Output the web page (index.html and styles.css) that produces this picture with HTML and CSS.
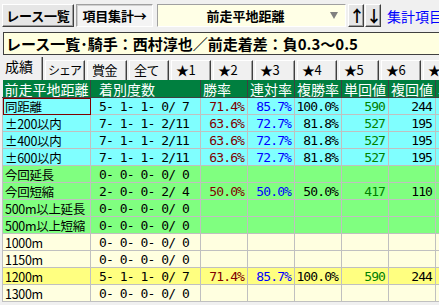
FILE: index.html
```html
<!DOCTYPE html>
<html lang="ja">
<head>
  <meta charset="UTF-8" />
  <title>項目集計</title>
  <link rel="stylesheet" href="styles.css">
</head>
<body>
  <div class="toolbar">
    <button class="btn btn-list">レース一覧</button>
    <button class="btn btn-sum">項目集計→</button>
    <div class="field">
      <span class="field-text">前走平地距離</span>
      <span class="field-arrow"></span>
    </div>
    <button class="btn btn-arrow btn-up">↑</button>
    <button class="btn btn-arrow">↓</button>
    <a class="link" href="#">集計項目&gt;</a>
  </div>

  <div class="caption">レース一覧･騎手：西村淳也／前走着差：負0.3～0.5</div>

  <div class="tabs">
    <div class="tab active">成績</div>
    <div class="tab tight">シェア</div>
    <div class="tab">賞金</div>
    <div class="tab">全て</div>
    <div class="tab">★1</div>
    <div class="tab">★2</div>
    <div class="tab">★3</div>
    <div class="tab">★4</div>
    <div class="tab">★5</div>
    <div class="tab">★6</div>
    <div class="tab">★7</div>
  </div>

  <table class="grid">
    <colgroup>
      <col class="c-name"><col class="c-count">
      <col class="c-num"><col class="c-num"><col class="c-num">
      <col class="c-num"><col class="c-num"><col class="c-num">
    </colgroup>
    <thead>
      <tr>
        <th>前走平地距離</th>
        <th class="h-count">着別度数</th>
        <th>勝率</th>
        <th>連対率</th>
        <th>複勝率</th>
        <th>単回値</th>
        <th>複回値</th>
        <th>単</th>
      </tr>
    </thead>
    <tbody>
      <tr class="cyan">
        <td class="name sel">同距離</td><td class="count">5- 1- 1- 0/ 7</td>
        <td class="win">71.4%</td><td class="ren">85.7%</td><td class="fuku">100.0%</td>
        <td class="tan">590</td><td class="fk">244</td><td></td>
      </tr>
      <tr class="cyan">
        <td class="name">±200以内</td><td class="count">7- 1- 1- 2/11</td>
        <td class="win">63.6%</td><td class="ren">72.7%</td><td class="fuku">81.8%</td>
        <td class="tan">527</td><td class="fk">195</td><td></td>
      </tr>
      <tr class="cyan">
        <td class="name">±400以内</td><td class="count">7- 1- 1- 2/11</td>
        <td class="win">63.6%</td><td class="ren">72.7%</td><td class="fuku">81.8%</td>
        <td class="tan">527</td><td class="fk">195</td><td></td>
      </tr>
      <tr class="cyan">
        <td class="name">±600以内</td><td class="count">7- 1- 1- 2/11</td>
        <td class="win">63.6%</td><td class="ren">72.7%</td><td class="fuku">81.8%</td>
        <td class="tan">527</td><td class="fk">195</td><td></td>
      </tr>
      <tr class="green">
        <td class="name">今回延長</td><td class="count">0- 0- 0- 0/ 0</td>
        <td></td><td></td><td></td><td></td><td></td><td></td>
      </tr>
      <tr class="green">
        <td class="name">今回短縮</td><td class="count">2- 0- 0- 2/ 4</td>
        <td class="win">50.0%</td><td class="ren">50.0%</td><td class="fuku">50.0%</td>
        <td class="tan">417</td><td class="fk">110</td><td></td>
      </tr>
      <tr class="green">
        <td class="name">500m以上延長</td><td class="count">0- 0- 0- 0/ 0</td>
        <td></td><td></td><td></td><td></td><td></td><td></td>
      </tr>
      <tr class="green">
        <td class="name">500m以上短縮</td><td class="count">0- 0- 0- 0/ 0</td>
        <td></td><td></td><td></td><td></td><td></td><td></td>
      </tr>
      <tr class="cream">
        <td class="name">1000m</td><td class="count">0- 0- 0- 0/ 0</td>
        <td></td><td></td><td></td><td></td><td></td><td></td>
      </tr>
      <tr class="cream">
        <td class="name">1150m</td><td class="count">0- 0- 0- 0/ 0</td>
        <td></td><td></td><td></td><td></td><td></td><td></td>
      </tr>
      <tr class="hit">
        <td class="name">1200m</td><td class="count">5- 1- 1- 0/ 7</td>
        <td class="win">71.4%</td><td class="ren">85.7%</td><td class="fuku">100.0%</td>
        <td class="tan">590</td><td class="fk">244</td><td></td>
      </tr>
      <tr class="cream">
        <td class="name">1300m</td><td class="count">0- 0- 0- 0/ 0</td>
        <td></td><td></td><td></td><td></td><td></td><td></td>
      </tr>
    </tbody>
  </table>
</body>
</html>
```

FILE: styles.css
```css
body {
  margin: 0;
  width: 439px;
  height: 305px;
  overflow: hidden;
  background: #f0f0f0;
  font-family: "Noto Sans CJK JP", sans-serif;
  color: #000;
}

/* top bar */
.toolbar {
  display: flex;
  align-items: center;
  height: 23px;
  padding: 4px 0 0 2px;
  white-space: nowrap;
}

.toolbar > * {
  flex: none;
}

.btn {
  box-sizing: border-box;
  height: 23px;
  margin: 0;
  padding: 0;
  font-family: "Noto Sans CJK JP", sans-serif;
  font-weight: bold;
  font-size: 13px;
  line-height: 19px;
  letter-spacing: -0.2px;
  white-space: nowrap;
  background: #e6e6e6;
  border: 1px solid;
  border-color: #fff #404040 #404040 #fff;
  box-shadow: inset -1px -1px 0 #a0a0a0;
  color: #000;
}

.btn-list {
  width: 72px;
}

.btn-sum {
  width: 77px;
  margin-left: 2px;
  background: #f4f4f4;
  border-color: #a0a0a0 #fff #fff #a0a0a0;
  box-shadow: inset 1px 1px 0 #d0d0d0;
}

.field {
  box-sizing: border-box;
  position: relative;
  width: 189px;
  height: 23px;
  margin-left: 4px;
  background: #ffffe6;
  border: 1px solid;
  border-color: #a0a0a0 #fff #fff #a0a0a0;
  text-align: center;
  font-weight: bold;
  font-size: 13px;
  line-height: 21px;
  padding-right: 12px;
}

.field-arrow {
  position: absolute;
  right: 7px;
  top: 7px;
  width: 0;
  height: 0;
  border-left: 4px solid transparent;
  border-right: 4px solid transparent;
  border-top: 7px solid #808080;
}

.btn-arrow {
  width: 16px;
  font-size: 16px;
  margin-left: 1px;
}

.btn-up {
  margin-left: 2px;
}

.link {
  margin-left: 6px;
  color: #0000ff;
  text-decoration: none;
  font-size: 14px;
}

/* caption */
.caption {
  box-sizing: border-box;
  height: 23px;
  margin: 5px 0 0 3px;
  padding-left: 2px;
  background: #ffffe0;
  border: 1px solid #404040;
  border-right: none;
  font-weight: bold;
  font-size: 15px;
  line-height: 21px;
  white-space: nowrap;
}

/* tabs */
.tabs {
  display: flex;
  gap: 2px;
  height: 23px;
  margin-top: 2px;
  padding-left: 3px;
  white-space: nowrap;
}

.tab {
  box-sizing: border-box;
  flex: none;
  width: 40px;
  height: 20px;
  margin-top: 3px;
  padding-left: 4px;
  border-top: 1px solid #fff;
  border-left: 1px solid #fff;
  border-right: 1px solid #404040;
  box-shadow: inset -1px 0 0 #a0a0a0;
  font-size: 13px;
  line-height: 18px;
  letter-spacing: -0.5px;
  overflow: hidden;
}

.tab.tight {
  padding-left: 2px;
  font-size: 12px;
  letter-spacing: -1px;
}

.tab.active {
  height: 23px;
  margin-top: 0;
  padding-left: 2px;
  border-top: none;
  border-left: none;
  font-size: 14px;
  line-height: 18px;
  letter-spacing: 0;
}

/* grid */
.grid {
  border-collapse: collapse;
  table-layout: fixed;
  width: 480px;
  margin-left: 2px;
}

.c-name { width: 88px; }
.c-count { width: 110px; }
.c-num { width: 47px; }

.grid th {
  height: 17px;
  padding: 0 0 0 2px;
  background: #007f3f;
  color: #fff;
  font-weight: normal;
  font-size: 14px;
  line-height: 16px;
  text-align: left;
  white-space: nowrap;
  overflow: hidden;
  border-left: 1px solid #404040;
  border-bottom: 1px solid #404040;
}

.grid th:first-child {
  border-left: none;
}

.grid th.h-count {
  padding-left: 8px;
}

.grid td {
  height: 16px;
  padding: 0 3px 0 0;
  border: 1px solid #c0c0c0;
  line-height: 15px;
  white-space: pre;
  overflow: hidden;
  text-align: right;
  font-family: "DejaVu Sans Mono", monospace;
  font-size: 13px;
  letter-spacing: -0.9px;
}

.grid td.name {
  padding: 0 0 0 2px;
  text-align: left;
  font-family: "Noto Sans CJK JP", sans-serif;
  font-size: 12.5px;
  letter-spacing: -0.3px;
}

.grid td.sel {
  outline: 1px solid #800000;
  outline-offset: -1px;
}

.grid td.count {
  padding-left: 8px;
  text-align: left;
}

.cyan td { background: #80ffff; }
.green td { background: #80ff80; }
.cream td { background: #ffffe0; }
.hit td { background: #ffff80; }

.win { color: #800000; }
.ren { color: #0000ff; }
.fuku { color: #000; }
.tan { color: #008000; }
.fk { color: #000; }
```
